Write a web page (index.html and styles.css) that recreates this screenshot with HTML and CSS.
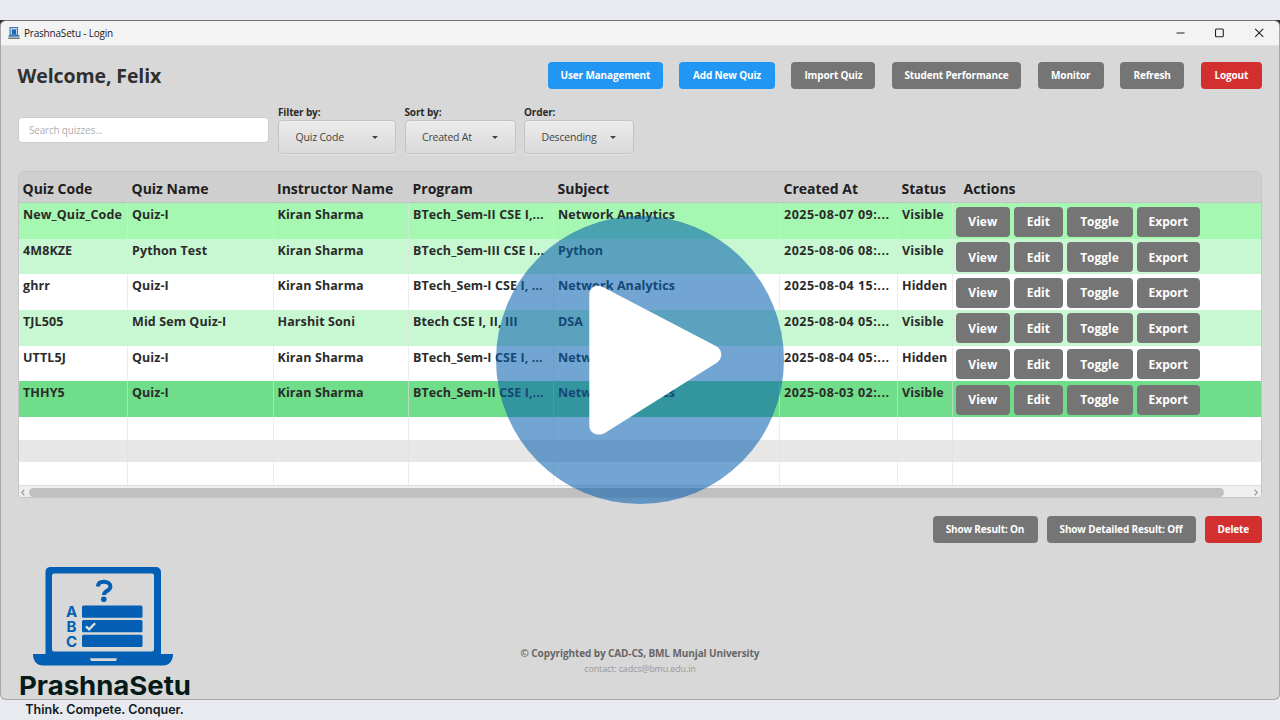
FILE: index.html
```
<!DOCTYPE html>
<html lang="en">
<head>
<meta charset="utf-8">
<title>PrashnaSetu - Login</title>
<link rel="stylesheet" href="styles.css">
</head>
<body>
<div class="frame">
<main class="window">
  <header class="titlebar">
    <svg class="app-icon" width="12" height="13" viewBox="0 0 12 13"><path d="M1.5 0h8.6v8.4H1.5z" fill="#3a7ab5"/><path d="M2.6 1h6.4v6.5H2.6z" fill="#b9d2e8"/><path d="M4 2.5h4v5H4z" fill="#1468b3"/><path d="M.6 8h10.8v1.8H.6z" fill="#3a7ab5"/><path d="M.3 11.3h11.4" stroke="#777" stroke-width="1.4"/></svg>
    <span class="window-title">PrashnaSetu - Login</span>
    <svg class="controls" width="90" height="12" viewBox="0 0 90 12" fill="none" stroke="#222" stroke-width="1.1"><path d="M1.5 6h8M80.2 1.8l8 8M88.2 1.8l-8 8"/><rect x="40.5" y="2" width="7.8" height="7.8" rx="1"/></svg>
  </header>
  <section class="topbar">
    <h1 class="welcome">Welcome, Felix</h1>
    <nav class="toolbar">
      <button class="btn blue w-user">User Management</button>
      <button class="btn blue w-add">Add New Quiz</button>
      <button class="btn w-import">Import Quiz</button>
      <button class="btn w-student">Student Performance</button>
      <button class="btn w-monitor">Monitor</button>
      <button class="btn w-refresh">Refresh</button>
      <button class="btn red w-logout">Logout</button>
    </nav>
  </section>
  <section class="filters">
    <div class="search">Search quizzes...</div>
    <div class="field f1"><span class="label">Filter by:</span><div class="combo"><span>Quiz Code</span><i class="arrow"></i></div></div>
    <div class="field f2"><span class="label">Sort by:</span><div class="combo"><span>Created At</span><i class="arrow"></i></div></div>
    <div class="field f3"><span class="label">Order:</span><div class="combo"><span>Descending</span><i class="arrow"></i></div></div>
  </section>
  <section class="table">
    <div class="row head"><span>Quiz Code</span><span>Quiz Name</span><span>Instructor Name</span><span>Program</span><span>Subject</span><span>Created At</span><span>Status</span><span class="h-act">Actions</span></div>
    <div class="row g1"><span>New_Quiz_Code</span><span>Quiz-I</span><span>Kiran Sharma</span><span>BTech_Sem-II CSE I,...</span><span>Network Analytics</span><span class="date">2025-08-07 09:...</span><span>Visible</span><div class="actions"><button>View</button><button>Edit</button><button>Toggle</button><button>Export</button></div></div>
    <div class="row g2"><span>4M8KZE</span><span>Python Test</span><span>Kiran Sharma</span><span>BTech_Sem-III CSE I...</span><span>Python</span><span class="date">2025-08-06 08:...</span><span>Visible</span><div class="actions"><button>View</button><button>Edit</button><button>Toggle</button><button>Export</button></div></div>
    <div class="row"><span>ghrr</span><span>Quiz-I</span><span>Kiran Sharma</span><span>BTech_Sem-I CSE I, ...</span><span>Network Analytics</span><span class="date">2025-08-04 15:...</span><span>Hidden</span><div class="actions"><button>View</button><button>Edit</button><button>Toggle</button><button>Export</button></div></div>
    <div class="row g2"><span>TJL505</span><span>Mid Sem Quiz-I</span><span>Harshit Soni</span><span>Btech CSE I, II, III</span><span>DSA</span><span class="date">2025-08-04 05:...</span><span>Visible</span><div class="actions"><button>View</button><button>Edit</button><button>Toggle</button><button>Export</button></div></div>
    <div class="row"><span>UTTL5J</span><span>Quiz-I</span><span>Kiran Sharma</span><span>BTech_Sem-I CSE I, ...</span><span>Network Analytics</span><span class="date">2025-08-04 05:...</span><span>Hidden</span><div class="actions"><button>View</button><button>Edit</button><button>Toggle</button><button>Export</button></div></div>
    <div class="row g3"><span>THHY5</span><span>Quiz-I</span><span>Kiran Sharma</span><span>BTech_Sem-II CSE I,...</span><span>Network Analytics</span><span class="date">2025-08-03 02:...</span><span>Visible</span><div class="actions"><button>View</button><button>Edit</button><button>Toggle</button><button>Export</button></div></div>
    <div class="row empty"><span></span><span></span><span></span><span></span><span></span><span></span><span></span><span></span></div>
    <div class="row empty alt"><span></span><span></span><span></span><span></span><span></span><span></span><span></span><span></span></div>
    <div class="row empty"><span></span><span></span><span></span><span></span><span></span><span></span><span></span><span></span></div>
    <div class="scroll">
      <svg width="4" height="7" viewBox="0 0 4 7"><path d="M3.3.7.8 3.5l2.5 2.8" fill="none" stroke="#999" stroke-width="1.2"/></svg>
      <div class="thumb"></div>
      <svg width="4" height="7" viewBox="0 0 4 7"><path d="m.7.7 2.5 2.8L.7 6.3" fill="none" stroke="#999" stroke-width="1.2"/></svg>
    </div>
  </section>
  <section class="bottom">
    <button class="btn w-show">Show Result: On</button>
    <button class="btn w-detail">Show Detailed Result: Off</button>
    <button class="btn red w-delete">Delete</button>
  </section>
  <footer class="footer">
    <div class="copy">© Copyrighted by CAD-CS, BML Munjal University</div>
    <div class="contact">contact: cadcs@bmu.edu.in</div>
  </footer>
</main>
<svg class="logo" width="200" height="160" viewBox="0 560 200 160">
  <g fill="#025fb3">
    <path fill-rule="evenodd" d="M50 567h106a5 5 0 0 1 5 5v82h12c0 7-4 11.500-10 11.500H43c-6 0-10-4.500-10-11.500h12.500v-82a5 5 0 0 1 4.500-5zM54 573.500a2 2 0 0 0-2 2v74a2 2 0 0 0 2 2h98a2 2 0 0 0 2-2v-74a2 2 0 0 0-2-2z"/>
    <rect x="82" y="605.500" width="60.500" height="12.300" rx="1.500"/>
    <rect x="82" y="620" width="60.500" height="12.300" rx="1.500"/>
    <rect x="82" y="634.700" width="60.500" height="12.300" rx="1.500"/>
    <text class="letter" x="71.500" y="617.300">A</text>
    <text class="letter" x="71.500" y="631.900">B</text>
    <text class="letter" x="71.500" y="646.600">C</text>
    <circle cx="103.800" cy="599.300" r="2.800"/>
  </g>
  <path d="M97.700 586.500c.4-3.200 3-4.700 6.200-4.700 3.800 0 6.500 1.900 6.500 4.900 0 4.200-6.400 3.900-6.400 8.300" fill="none" stroke="#025fb3" stroke-width="4"/>
  <path d="m86 626.300 3.100 3 6-6" fill="none" stroke="#e3e3e3" stroke-width="2.300"/>
  <path d="M90 658.300h27l-1 2.700H91z" fill="#d8d8d8"/>
  <text class="brand" x="19" y="694.500" textLength="172" lengthAdjust="spacingAndGlyphs">PrashnaSetu</text>
  <text class="tagline" x="25.300" y="713.500" textLength="158.500" lengthAdjust="spacingAndGlyphs">Think. Compete. Conquer.</text>
</svg>
<svg class="play" width="288" height="288" viewBox="496 216 288 288"><circle cx="640" cy="360" r="144" fill="#035ead" fill-opacity=".56"/><path d="M589.300 294.500c0-7 7-10.800 13.500-7.500l113.500 59.300c6.600 3.400 6.600 12.500.5 16.400l-112 70.200c-6.500 4.100-15.500.5-15.500-7.500z" fill="#fff"/></svg>
</div>
</body>
</html>
```
FILE: styles.css
```
* { box-sizing: border-box; }
body { margin: 0; background: #e8eaef; font-family: "Open Sans", "Noto Sans", sans-serif; color: #2b2b2b; }
button { font-family: inherit; border: 0; padding: 0; white-space: nowrap; }
.frame { position: relative; width: 1280px; height: 720px; overflow: hidden; padding-top: 20px; background: linear-gradient(#e8eaef 20px, #333 20px, #333 50px, #e8eaef 50px); }
.window { height: 680px; background: #d8d8d8; border: 1px solid #a6a6aa; border-top-color: #707074; border-radius: 6px; overflow: hidden; }
.titlebar { height: 25px; background: #f3f3f3; border-bottom: 1px solid #e2e2e2; display: flex; align-items: center; padding: 0 14px 0 7px; }
.window-title { font-size: 10px; color: #222; margin-left: 4px; letter-spacing: -.2px; }
.controls { margin-left: auto; }
.topbar { display: flex; justify-content: space-between; padding: 16px 17px 0 16.500px; height: 55px; }
.welcome { margin: 0; font-size: 19.500px; line-height: 28px; font-weight: 700; letter-spacing: -.1px; color: #303030; }
.toolbar { display: flex; gap: 16.650px; }
.btn { height: 27px; border-radius: 4px; background: #757575; color: #fff; font-size: 10px; font-weight: 700; line-height: 27px; letter-spacing: -.15px; flex: none; }
.blue { background: #2196f3; }
.red { background: #d32f2f; }
.w-user { width: 114.500px; }
.w-add { width: 95.500px; }
.w-import { width: 84px; }
.w-student { width: 129px; }
.w-monitor { width: 66px; }
.w-refresh { width: 63.500px; }
.w-logout { width: 61.500px; }
.filters { display: flex; height: 70px; padding-left: 17px; }
.search { width: 251px; height: 26px; margin-top: 16px; background: #fff; border: 1px solid #ccc; border-radius: 4px; font-size: 10px; line-height: 24px; padding-left: 10px; color: #b0b0b0; letter-spacing: -.2px; }
.field { display: flex; flex-direction: column; padding-top: 4px; }
.f1 { width: 117.500px; margin-left: 9px; }
.f2 { width: 111px; margin-left: 9px; }
.f3 { width: 110px; margin-left: 8.500px; }
.label { font-size: 10px; line-height: 14px; height: 15px; font-weight: 700; letter-spacing: -.15px; }
.combo { height: 34px; border: 1px solid #c3c3c3; border-radius: 4px; background: linear-gradient(#ececec, #d9d9d9); box-shadow: 0 1px 0 #e4e4e4; display: flex; align-items: center; justify-content: space-between; padding: 0 17px 0 16.500px; font-size: 10.500px; letter-spacing: -.2px; color: #444; }
.arrow { border: 3.500px solid transparent; border-top-color: #444; border-bottom: 0; }
.table { margin: 0 17px; width: 1244px; height: 327px; border: 1px solid #c5c5c5; border-radius: 5px; overflow: hidden; background: #fff; }
.row { display: grid; grid-template-columns: 109px 145.500px 135.500px 145px 226px 118px 54.500px 1fr; height: 35.650px; font-size: 12.500px; font-weight: 700; line-height: 24px; letter-spacing: .1px; }
.row > span { padding-left: 4px; white-space: nowrap; border-right: 1px solid rgba(225,225,225,.6); }
.row > :last-child { border-right: 0; }
.row > .date { letter-spacing: .5px; }
.head { height: 31px; font-size: 14px; line-height: 33px; background: #cfcfcf; color: #202020; border-bottom: 1px solid #c2c2c2; letter-spacing: 0; }
.head > span { border: 0; padding-left: 3.500px; }
.head .h-act { padding-left: 11px; }
.g1 { background: #a5f7b2; }
.g2 { background: #c8f8d1; }
.g3 { background: #70dd8b; }
.actions { display: flex; gap: 4px; padding: 3.500px 0 0 3px; letter-spacing: 0; }
.actions button { height: 30px; border-radius: 4px; background: #757575; color: #fff; font-size: 12px; font-weight: 700; width: 54.500px; }
.actions button:nth-child(2) { width: 48.500px; }
.actions button:nth-child(3) { width: 66px; }
.actions button:nth-child(4) { width: 63.500px; }
.empty { height: 22.700px; }
.alt { background: #e7e7e7; }
.scroll { height: 13px; background: #efefef; border-top: 1px solid #dedede; display: flex; align-items: center; padding: 1px 3px 0 2px; }
.thumb { height: 9px; width: 1195px; margin: 0 auto 0 4px; border-radius: 5px; background: #c0c0c0; }
.bottom { display: flex; justify-content: flex-end; gap: 9px; padding: 18px 17px 0; height: 148px; }
.w-show { width: 105px; }
.w-detail { width: 149px; }
.w-delete { width: 57.500px; }
.footer { text-align: center; }
.copy { font-size: 10px; line-height: 15px; font-weight: 700; color: #666; letter-spacing: -.1px; }
.contact { font-size: 9px; line-height: 15px; color: #999; letter-spacing: -.15px; }
.logo { position: absolute; left: 0; top: 560px; }
.letter { font: 700 15px Inter, sans-serif; text-anchor: middle; }
.brand { font: 700 26px Inter, sans-serif; fill: #061a17; }
.tagline { font: 600 12.500px Inter, sans-serif; fill: #10201f; }
.play { position: absolute; left: 496px; top: 216px; }
```
